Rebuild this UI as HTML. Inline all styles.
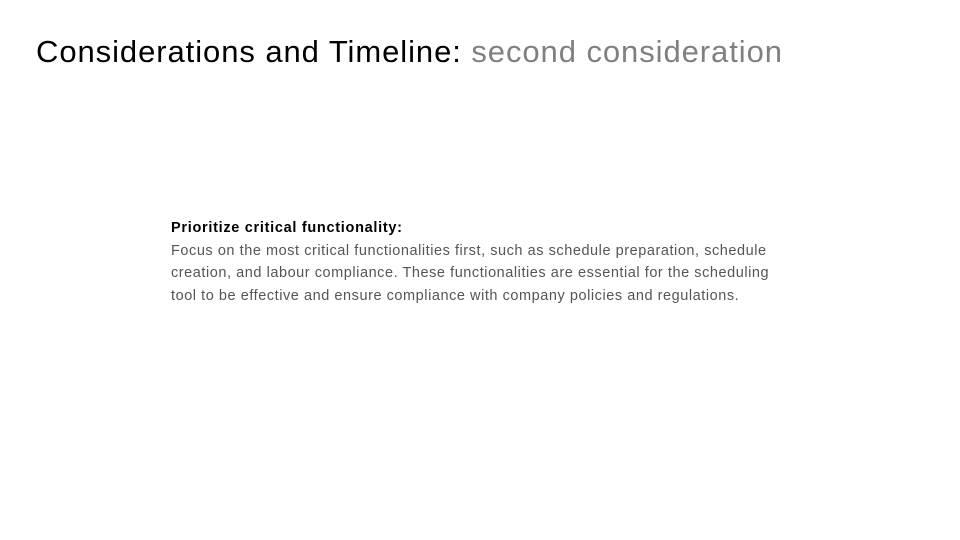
<!DOCTYPE html>
<html><head><meta charset="utf-8"><style>
html,body{margin:0;padding:0;background:#fff;width:960px;height:540px;overflow:hidden;font-family:"Liberation Sans",sans-serif;}
h1{position:absolute;left:36px;top:34px;margin:0;font-weight:normal;font-size:31px;letter-spacing:0.93px;color:#000;white-space:nowrap;}
h1 span{color:#808080;}
.b{position:absolute;left:171px;top:217px;font-size:14.5px;line-height:22.5px;color:#555;letter-spacing:0.55px;white-space:nowrap;}
.b b{color:#000;font-weight:900;letter-spacing:0.7px;}
</style></head><body>
<h1>Considerations and Timeline: <span>second consideration</span></h1>
<div class="b"><b>Prioritize critical functionality:</b><br>Focus on the most critical functionalities first, such as schedule preparation, schedule<br>creation, and labour compliance. These functionalities are essential for the scheduling<br>tool to be effective and ensure compliance with company policies and regulations.</div>
</body></html>
